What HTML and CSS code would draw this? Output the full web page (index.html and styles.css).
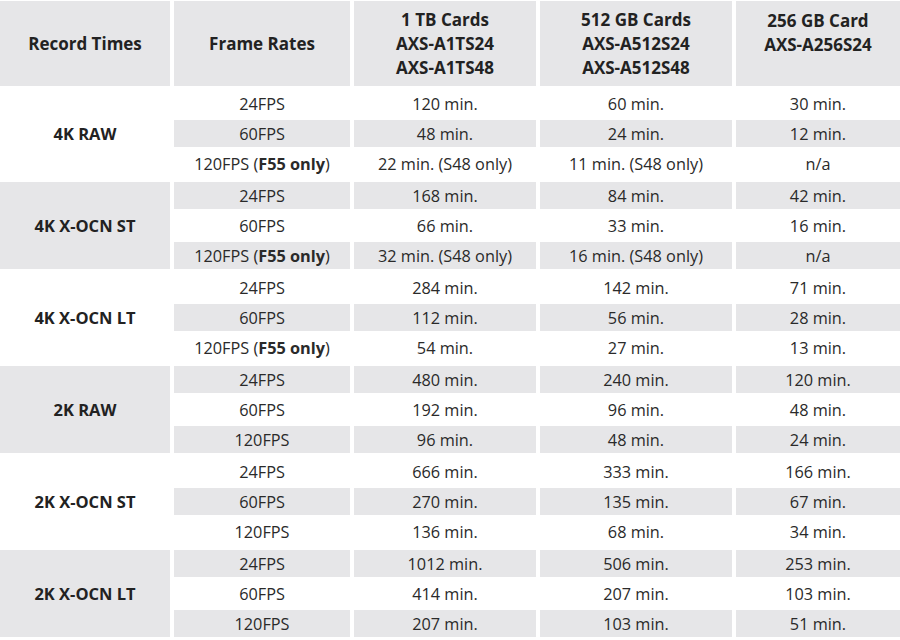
FILE: index.html
```html
<!DOCTYPE html>
<html>
<head>
<meta charset="utf-8">
<link rel="stylesheet" href="styles.css">
</head>
<body>
<div class="table">
  <div class="row head">
    <div class="cell hc">Record Times</div>
    <div class="cell hc">Frame Rates</div>
    <div class="cell hc">1 TB Cards<br>AXS-A1TS24<br>AXS-A1TS48</div>
    <div class="cell hc">512 GB Cards<br>AXS-A512S24<br>AXS-A512S48</div>
    <div class="cell hc top">256 GB Card<br>AXS-A256S24</div>
  </div>

  <div class="group">
    <div class="label">4K RAW</div>
    <div class="cell">24FPS</div><div class="cell">120 min.</div><div class="cell">60 min.</div><div class="cell">30 min.</div>
    <div class="cell g">60FPS</div><div class="cell g">48 min.</div><div class="cell g">24 min.</div><div class="cell g">12 min.</div>
    <div class="cell">120FPS (<b>F55 only</b>)</div><div class="cell">22 min. (S48 only)</div><div class="cell">11 min. (S48 only)</div><div class="cell">n/a</div>
  </div>

  <div class="group">
    <div class="label g">4K X-OCN ST</div>
    <div class="cell g">24FPS</div><div class="cell g">168 min.</div><div class="cell g">84 min.</div><div class="cell g">42 min.</div>
    <div class="cell">60FPS</div><div class="cell">66 min.</div><div class="cell">33 min.</div><div class="cell">16 min.</div>
    <div class="cell g">120FPS (<b>F55 only</b>)</div><div class="cell g">32 min. (S48 only)</div><div class="cell g">16 min. (S48 only)</div><div class="cell g">n/a</div>
  </div>

  <div class="group">
    <div class="label">4K X-OCN LT</div>
    <div class="cell">24FPS</div><div class="cell">284 min.</div><div class="cell">142 min.</div><div class="cell">71 min.</div>
    <div class="cell g">60FPS</div><div class="cell g">112 min.</div><div class="cell g">56 min.</div><div class="cell g">28 min.</div>
    <div class="cell">120FPS (<b>F55 only</b>)</div><div class="cell">54 min.</div><div class="cell">27 min.</div><div class="cell">13 min.</div>
  </div>

  <div class="group">
    <div class="label g">2K RAW</div>
    <div class="cell g">24FPS</div><div class="cell g">480 min.</div><div class="cell g">240 min.</div><div class="cell g">120 min.</div>
    <div class="cell">60FPS</div><div class="cell">192 min.</div><div class="cell">96 min.</div><div class="cell">48 min.</div>
    <div class="cell g">120FPS</div><div class="cell g">96 min.</div><div class="cell g">48 min.</div><div class="cell g">24 min.</div>
  </div>

  <div class="group">
    <div class="label">2K X-OCN ST</div>
    <div class="cell">24FPS</div><div class="cell">666 min.</div><div class="cell">333 min.</div><div class="cell">166 min.</div>
    <div class="cell g">60FPS</div><div class="cell g">270 min.</div><div class="cell g">135 min.</div><div class="cell g">67 min.</div>
    <div class="cell">120FPS</div><div class="cell">136 min.</div><div class="cell">68 min.</div><div class="cell">34 min.</div>
  </div>

  <div class="group">
    <div class="label g">2K X-OCN LT</div>
    <div class="cell g">24FPS</div><div class="cell g">1012 min.</div><div class="cell g">506 min.</div><div class="cell g">253 min.</div>
    <div class="cell">60FPS</div><div class="cell">414 min.</div><div class="cell">207 min.</div><div class="cell">103 min.</div>
    <div class="cell g">120FPS</div><div class="cell g">207 min.</div><div class="cell g">103 min.</div><div class="cell g">51 min.</div>
  </div>
</div>
</body>
</html>
```

FILE: styles.css
```css
html, body {
  margin: 0;
  padding: 0;
  background: #ffffff;
}
body {
  font-family: "Open Sans", "Noto Sans", sans-serif;
  font-size: 16.3px;
  color: #2a2a2a;
}
.table {
  padding-top: 1px;
  display: flex;
  flex-direction: column;
  gap: 5px;
  width: 900px;
}
.row, .group {
  display: grid;
  grid-template-columns: 170px 176px 182px 192px 1fr;
  column-gap: 4px;
}
.head {
  height: 85px;
  margin-bottom: -1px;
}
.group {
  grid-template-rows: 27px 27px 27px;
  row-gap: 3px;
}
.cell, .label {
  display: flex;
  align-items: center;
  justify-content: center;
  text-align: center;
  white-space: nowrap;
}
.hc {
  background: #e6e6e8;
  font-weight: 700;
  font-size: 17px;
  line-height: 24px;
  color: #222222;
}
.hc.top {
  align-items: flex-start;
  padding-top: 8px;
}
.label {
  grid-row: 1 / span 3;
  grid-column: 1;
  font-weight: 700;
  font-size: 16.5px;
  color: #222222;
}
.g {
  background: #e6e6e8;
}
b {
  font-weight: 700;
}
```
